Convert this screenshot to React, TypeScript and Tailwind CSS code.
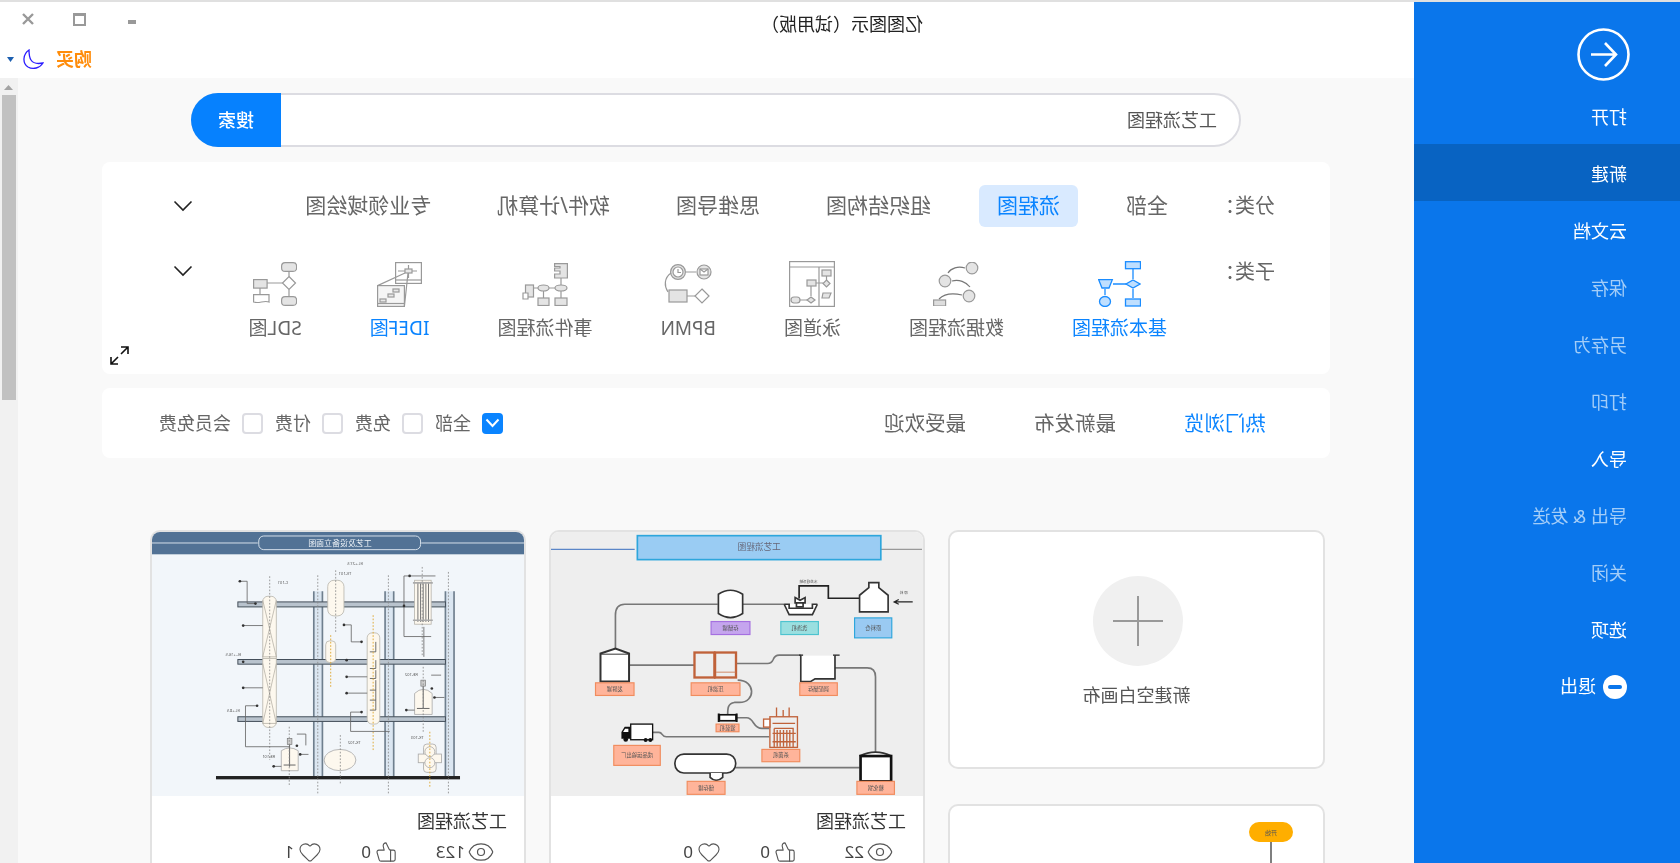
import { Eye, Heart, ThumbsUp } from "lucide-react";

const menu = [
  { label: "打开", on: true },
  { label: "新建", on: true, active: true },
  { label: "云文档", on: true },
  { label: "保存" },
  { label: "另存为" },
  { label: "打印" },
  { label: "导入", on: true },
  { label: "导出 & 发送" },
  { label: "关闭" },
  { label: "选项", on: true },
];

const categories = ["全部", "流程图", "组织结构图", "思维导图", "软件/计算机", "专业领域绘图"];
const filters = ["全部", "免费", "付费", "会员免费"];

function Chevron() {
  return (
    <svg width="20" height="12" viewBox="0 0 20 12" fill="none" stroke="#222" strokeWidth="1.6">
      <path d="M1.5 1.5L10 10L18.5 1.5" />
    </svg>
  );
}

function BasicIcon() {
  return (
    <svg width="43" height="46" viewBox="0 0 43 46" className="-scale-x-100" fill="#bfdfff" stroke="#1a8cff" strokeWidth="1.3">
      <rect x="27.5" y="0.7" width="15" height="7" />
      <path d="M35 19L42 23L35 27L28 23Z" />
      <path d="M0.7 18.7H14.3L11 27H4Z" />
      <ellipse cx="7" cy="40.5" rx="5.5" ry="5" />
      <rect x="27.5" y="38" width="15" height="7" />
      <path d="M35 8V18M35 28V37M28 23H15M7 28V34" fill="none" />
    </svg>
  );
}

function DataIcon() {
  return (
    <svg width="46" height="44" viewBox="0 0 46 44" className="-scale-x-100" fill="#e4e4e4" stroke="#999" strokeWidth="1.2">
      <circle cx="39" cy="6" r="5.8" />
      <circle cx="12" cy="19" r="5.8" />
      <circle cx="36" cy="34" r="5.8" />
      <rect x="0.6" y="38" width="12" height="6" fill="#ddd" />
      <path d="M32 6C25 4 18 6 15 11M19 19C26 17 33 20 37 25M29 33C20 31 11 32 6 37" fill="none" stroke="#777" />
    </svg>
  );
}

function SwimIcon() {
  return (
    <svg width="46" height="46" viewBox="0 0 46 46" className="-scale-x-100" fill="#e4e4e4" stroke="#999" strokeWidth="1.2">
      <rect x="0.6" y="0.6" width="44.8" height="44.8" fill="#fff" />
      <path d="M0.6 6H45.4M30 6V45" fill="none" />
      <rect x="33" y="9" width="9" height="6" />
      <path d="M37.5 19L41 22.5L37.5 26L34 22.5Z" />
      <rect x="18" y="19" width="9" height="6" />
      <path d="M22 36L26 39L22 42L18 39Z" />
      <path d="M34 32H42L40 37H33Z" />
      <rect x="2" y="36" width="9" height="6" rx="3" />
      <path d="M22 25V35M11 39H18M37.5 15V19M27 22H34" fill="none" />
    </svg>
  );
}

function BpmnIcon() {
  return (
    <svg width="48" height="40" viewBox="0 0 48 40" className="-scale-x-100" fill="#e4e4e4" stroke="#999" strokeWidth="1.2">
      <circle cx="14" cy="8" r="7.4" />
      <circle cx="14" cy="8" r="5" fill="#fff" />
      <path d="M14 5V8.5H17" fill="none" />
      <circle cx="40" cy="8" r="7" />
      <rect x="36" y="5" width="8" height="6" fill="#fff" />
      <path d="M36 5L40 8L44 5" fill="none" />
      <rect x="5" y="26" width="18" height="12" />
      <path d="M38 25L45 32L38 39L31 32Z" fill="#fff" />
      <path d="M22 8H32M23 32H31M7 9C0 14 0 22 4 28" fill="none" />
    </svg>
  );
}

function EventIcon() {
  return (
    <svg width="46" height="43" viewBox="0 0 46 43" className="-scale-x-100" fill="#e4e4e4" stroke="#999" strokeWidth="1.2">
      <path d="M32.6 0.6H45.4V15H32.6V11H38V8H32.6V5H38V3.5H32.6Z" />
      <ellipse cx="39" cy="25" rx="6" ry="3" />
      <ellipse cx="21.5" cy="25" rx="5.5" ry="3" />
      <rect x="16" y="35" width="11" height="7.5" />
      <rect x="33" y="35" width="12" height="7.5" />
      <rect x="3.5" y="22" width="8" height="12" />
      <path d="M1 30H6V36H1Z" fill="#fff" />
      <path d="M39 15V22M33 25H27M16 25H12M21.5 35V28M39 35V28" fill="none" />
    </svg>
  );
}

function IdefIcon() {
  return (
    <svg width="45" height="45" viewBox="0 0 45 45" className="-scale-x-100" fill="#e8e8e8" stroke="#999" strokeWidth="1.2">
      <rect x="18.6" y="0.6" width="25.8" height="20.8" fill="#fff" />
      <path d="M18.6 18H44.4" fill="none" />
      <rect x="0.6" y="23.6" width="26.8" height="20.8" fill="#f5f5f5" />
      <path d="M0.6 41.5H27.4" fill="none" />
      <rect x="28" y="7" width="7" height="4" />
      <path d="M21 9H28M35 9H40M31.5 3V7M31.5 11V16M28 11L0.6 23.6M31 11L27.4 44.4" fill="none" />
      <rect x="16" y="27" width="6" height="3" />
      <rect x="11" y="32" width="6" height="3" />
      <rect x="3" y="37" width="6" height="3" />
    </svg>
  );
}

function SdlIcon() {
  return (
    <svg width="44" height="44" viewBox="0 0 44 44" className="-scale-x-100" fill="#e4e4e4" stroke="#999" strokeWidth="1.2">
      <rect x="28.6" y="0.6" width="15" height="8.8" rx="3.5" />
      <path d="M36 14.5L42.5 21L36 27.5L29.5 21Z" fill="#fff" />
      <rect x="28.6" y="34.6" width="15" height="8.8" rx="3.5" />
      <rect x="0.6" y="17.6" width="13.5" height="8.5" />
      <path d="M0.6 32.6H16V40C11 38 6 42 0.6 40Z" fill="#fff" />
      <path d="M36 9.4V14.5M36 27.5V34.6M29.5 21H14.1M7 26V32.6" fill="none" />
    </svg>
  );
}

const subTypes = [
  { label: "基本流程图", icon: <BasicIcon />, blue: true },
  { label: "数据流程图", icon: <DataIcon /> },
  { label: "泳道图", icon: <SwimIcon /> },
  { label: "BPMN", icon: <BpmnIcon /> },
  { label: "事件流程图", icon: <EventIcon /> },
  { label: "IDEF图", icon: <IdefIcon />, blue: true },
  { label: "SDL图", icon: <SdlIcon /> },
];

// tiny caption inside a thumbnail, flipped back because the svg itself is flipped
function Cap({ x, y, t, size = 16, fill = "#555" }: { x: number; y: number; t: string; size?: number; fill?: string }) {
  return (
    <text transform={`translate(${x} ${y}) scale(-1 1)`} textAnchor="middle" fontSize={size} fill={fill}>
      {t}
    </text>
  );
}

function Tag({ x, y, w, h, t, fill = "#ffb49a", stroke = "#f08c5e" }: { x: number; y: number; w: number; h: number; t: string; fill?: string; stroke?: string }) {
  return (
    <g>
      <rect x={x} y={y} width={w} height={h} fill={fill} stroke={stroke} strokeWidth="3.5" />
      <Cap x={x + w / 2} y={y + h / 2 + 5} t={t} />
    </g>
  );
}

function ProcessThumb() {
  return (
    <svg viewBox="33 35 1120 793" className="block w-full h-[264px] -scale-x-100 blur-[0.6px]" preserveAspectRatio="none">
      <rect x="33" y="35" width="1120" height="793" fill="#eeeeee" />
      <path d="M33 87H285" stroke="#5b86c8" strokeWidth="4" />
      <path d="M1026 87H1150" stroke="#999" strokeWidth="4" />
      <rect x="293" y="46" width="733" height="72" fill="#9accf3" stroke="#2ea6dc" strokeWidth="5" />
      <Cap x={660} y={90} t="工艺流程图" size={26} fill="#667" />
      <g fill="none" stroke="#777" strokeWidth="5">
        <path d="M227 385V285Q227 252 255 252H535" />
        <path d="M610 252H735" />
        <path d="M268 435H465" />
        <path d="M590 430H685Q697 430 702 418Q707 405 720 405H785" />
        <path d="M888 443H985Q1010 443 1010 470V700" />
        <path d="M595 480C650 480 650 547 600 547H585C565 550 565 565 565 583" />
        <path d="M592 593H622C645 593 640 625 668 625H690" />
        <path d="M340 637H358C370 637 365 650 380 650H690" />
        <path d="M590 743H962" />
      </g>
      <g fill="none" stroke="#222" strokeWidth="5">
        <path d="M780 235V197H868V234H962" />
        <path d="M1122 245H1068M1080 238L1066 245L1080 252" strokeWidth="3.5" />
      </g>
      <g fill="#fff" stroke="#333" strokeWidth="5">
        <path d="M537 222Q573 198 610 222V280Q573 304 537 280Z" />
        <path d="M735 252L750 283H820L835 252M735 252H750V264H820V252H835" />
        <path d="M768 232L783 240L798 232V248H768ZM772 248H792V260H772Z" />
        <path d="M962 275V225L990 202V187H1020V202L1048 225V275Z" />
        <path d="M182 484V400L227 385L268 400V484Z" strokeWidth="6" />
        <path d="M182 402H268" strokeWidth="3" />
        <path d="M785 405V484H815L828 476H888V405" />
        <rect x="406" y="702" width="183" height="57" rx="27" />
        <path d="M512 759V772Q530 790 550 772V759" />
        <path d="M962 708Q1010 684 1058 708" />
        <rect x="965" y="708" width="92" height="76" strokeWidth="8" stroke="#111" />
      </g>
      <rect x="785" y="400" width="103" height="6" fill="#eeeeee" />
      <path d="M780 405H792M882 405H902" stroke="#222" strokeWidth="4" />
      <g stroke="#c0623a" strokeWidth="7">
        <rect x="465" y="397" width="60" height="75" fill="#eee" />
        <rect x="527" y="397" width="63" height="75" fill="#eee" />
      </g>
      <path d="M530 456H588" stroke="#d28a66" strokeWidth="3" />
      <rect x="540" y="584" width="50" height="18" fill="#fff" stroke="#111" strokeWidth="5" />
      <path d="M538 580V606M592 580V606" stroke="#111" strokeWidth="6" />
      <g fill="none" stroke="#c0623a" strokeWidth="4">
        <rect x="692" y="590" width="83" height="92" />
        <path d="M712 562V590M732 570V590M750 562V590M700 610H768M705 625H762V682M705 625V682M714 630V680M723 630V680M733 630V680M743 630V680M752 630V680M700 640H770M700 665H770" />
        <rect x="673" y="597" width="19" height="24" fill="#fff" />
      </g>
      <rect x="273" y="612" width="66" height="47" fill="#fff" stroke="#111" strokeWidth="4" />
      <path d="M272 620H255L245 636V656H272Z" fill="#111" />
      <path d="M256 626H266V636H250Z" fill="#fff" />
      <circle cx="258" cy="658" r="7" fill="#111" />
      <circle cx="318" cy="660" r="6" fill="#111" />
      <circle cx="332" cy="660" r="6" fill="#111" />
      <Tag x={515} y={304} w={117} h={39} t="存储罐" fill="#c5a5ee" stroke="#a56fe0" />
      <Tag x={725} y={304} w={113} h={39} t="洗涤机" fill="#9adfe0" stroke="#4dc3cf" />
      <Tag x={947} y={293} w={112} h={60} t="原料仓" fill="#9acaf2" stroke="#2ea6dc" />
      <Tag x={167} y={488} w={116} h={38} t="发酵罐" />
      <Tag x={455} y={488} w={147} h={38} t="压滤机" />
      <Tag x={782} y={488} w={113} h={38} t="调配储存" />
      <Tag x={530} y={612} w={69} h={23} t="灌装机" />
      <Tag x={668} y={688} w={114} h={37} t="杀菌机" />
      <Tag x={222} y={676} w={140} h={60} t="成品运输出厂" />
      <Tag x={443} y={784} w={114} h={39} t="储存罐" />
      <Tag x={954} y={784} w={113} h={39} t="糖化锅" />
      <Cap x={1095} y={222} t="原 料" size={11} />
      <Cap x={808} y={188} t="水处理系统" size={11} />
    </svg>
  );
}

function Vessel({ x, y, w, h }: { x: number; y: number; w: number; h: number }) {
  return <rect x={x} y={y} width={w} height={h} rx={w / 2.6} fill="#fdf8ee" stroke="#b9b6ae" strokeWidth="2.5" />;
}

function ElevationThumb() {
  return (
    <svg viewBox="33 35 1122 793" className="block w-full h-[264px] -scale-x-100 blur-[0.6px]" preserveAspectRatio="none">
      <rect x="33" y="35" width="1122" height="793" fill="#f2f6fa" />
      <rect x="33" y="35" width="1122" height="67" fill="#527295" />
      <path d="M33 68H352M845 68H1155" stroke="#d5e0ea" strokeWidth="3" />
      <rect x="355" y="47" width="488" height="41" rx="15" fill="#527295" stroke="#d5e0ea" strokeWidth="3" />
      <Cap x={600} y={76} t="工艺及设备立面图" size={24} fill="#eef3f8" />
      <g fill="#dbe6f1">
        <rect x="522" y="213" width="26" height="557" />
        <rect x="737" y="213" width="26" height="557" />
        <rect x="919" y="213" width="26" height="557" />
      </g>
      <g stroke="#6f7f8e" strokeWidth="5" fill="none">
        <path d="M521 213V770M547 213V770M736 213V770M762 213V770M918 213V770M944 213V770" />
      </g>
      <g fill="#b9c3cd" stroke="#444f5a" strokeWidth="3">
        <rect x="292" y="245" width="626" height="15" />
        <rect x="292" y="418" width="626" height="14" />
        <rect x="292" y="590" width="626" height="14" />
      </g>
      <rect x="226" y="768" width="736" height="10" fill="#222" />
      <Vessel x={367} y={228} w={41} h={394} />
      <path d="M367 240L408 410L367 410L408 240M367 430L408 610L367 610L408 430M367 415H408" fill="none" stroke="#a9a59a" strokeWidth="2" />
      <Vessel x={563} y={180} w={49} h={107} />
      <Vessel x={557} y={362} w={30} h={65} />
      <Vessel x={682} y={338} w={38} h={274} />
      <g fill="none" stroke="#555" strokeWidth="2.5">
        <path d="M690 395H708V365M690 445H708V420M690 475H708V450M690 510H708V480M690 540H708V510M690 570H708V540" />
      </g>
      <rect x="825" y="180" width="50" height="132" fill="#fdf8ee" stroke="#b9b6ae" strokeWidth="2.5" />
      <path d="M835 185V305M843 185V305M851 185V305M859 185V305M867 185V305" stroke="#777" strokeWidth="3" />
      <path d="M820 188H880M820 300H880" stroke="#aaa" strokeWidth="5" />
      <path d="M825 520Q851 495 878 520V583H825Z" fill="#fdf8ee" stroke="#aaa" strokeWidth="2.5" />
      <path d="M423 692Q448 675 474 692V752H423Z" fill="#fdf8ee" stroke="#aaa" strokeWidth="2.5" />
      <path d="M851 485V565M448 660V740M832 565H870M430 735H466" stroke="#666" strokeWidth="3" />
      <rect x="844" y="480" width="14" height="18" fill="#ccc" stroke="#777" strokeWidth="2" />
      <rect x="441" y="655" width="14" height="18" fill="#ccc" stroke="#777" strokeWidth="2" />
      <ellipse cx="600" cy="720" rx="48" ry="32" fill="#fdf8ee" stroke="#aaa" strokeWidth="2.5" />
      <rect x="852" y="672" width="38" height="85" rx="10" fill="#fdf8ee" stroke="#aaa" strokeWidth="2.5" />
      <rect x="836" y="702" width="70" height="26" fill="#fdf8ee" stroke="#aaa" strokeWidth="2.5" />
      <circle cx="871" cy="695" r="15" fill="#fdf8ee" stroke="#aaa" strokeWidth="2.5" />
      <circle cx="871" cy="728" r="15" fill="#fdf8ee" stroke="#aaa" strokeWidth="2.5" />
      <g fill="none" stroke="#888" strokeWidth="2.5" strokeDasharray="5 5">
        <path d="M388 168V720M587 150V335M848 140V410M851 440V635M447 620V800M601 645V795M533 165V820M746 165V820M927 155V820" />
      </g>
      <g fill="none" stroke="#e0ad3e" strokeWidth="3" strokeDasharray="5 5">
        <path d="M572 345V500M700 285V695M871 635V800" />
      </g>
      <g fill="none" stroke="#666" strokeWidth="2.5">
        <path d="M298 183H320V250H345M305 316H367M305 503H367M612 314H634V365H665M620 470H682M620 519H682M350 557H315V680H448M665 576H632V634H750M875 349H793V167H888M853 320V410M875 465H905M885 532H915M800 570H825M470 642H497V676M480 703H505M400 739H423" />
      </g>
      <g fill="#333">
        <circle cx="298" cy="183" r="4" />
        <circle cx="345" cy="250" r="4" />
        <circle cx="308" cy="316" r="4" />
        <circle cx="308" cy="425" r="4" />
        <circle cx="308" cy="503" r="4" />
        <circle cx="350" cy="557" r="4" />
        <circle cx="612" cy="314" r="4" />
        <circle cx="665" cy="365" r="4" />
        <circle cx="620" cy="420" r="4" />
        <circle cx="620" cy="470" r="4" />
        <circle cx="620" cy="519" r="4" />
        <circle cx="665" cy="576" r="4" />
        <circle cx="793" cy="257" r="4" />
        <circle cx="810" cy="167" r="4" />
        <circle cx="877" cy="505" r="4" />
        <circle cx="885" cy="532" r="4" />
        <circle cx="800" cy="570" r="4" />
        <circle cx="470" cy="677" r="4" />
        <circle cx="480" cy="703" r="4" />
        <circle cx="400" cy="739" r="4" />
      </g>
      <g>
        <Cap x={428} y={190} t="C-101" size={12} />
        <Cap x={615} y={163} t="TK-101" size={12} />
        <Cap x={645} y={133} t="EL.+27.5" size={12} />
        <Cap x={278} y={407} t="EL.+16.5" size={12} />
        <Cap x={278} y={575} t="EL.+8.5" size={12} />
        <Cap x={815} y={467} t="RE-102" size={12} />
        <Cap x={833} y={658} t="TK-103" size={12} />
        <Cap x={643} y={673} t="TK-102" size={12} />
        <Cap x={385} y={713} t="RE-101" size={12} />
      </g>
    </svg>
  );
}

function StartThumb() {
  return (
    <svg width="120" height="80" viewBox="0 0 120 80" className="absolute left-0 top-0 blur-[0.3px]">
      <rect x="30" y="16" width="44" height="20" rx="10" fill="#ffae00" />
      <path d="M52 36V80" stroke="#555" strokeWidth="1.5" />
      <text x="52" y="29" textAnchor="middle" fontSize="6" fill="#555">
        开始
      </text>
    </svg>
  );
}

function TemplateCard({ thumb, views, likes, favs }: { thumb: React.ReactNode; views: number; likes: number; favs: number }) {
  return (
    <div className="bg-white border-2 border-[#e2e2e2] rounded-[10px] overflow-hidden h-[400px]">
      {thumb}
      <div className="pl-[17px] pt-[12px] text-[18px] leading-[26px] text-[#333]">工艺流程图</div>
      <div className="flex items-center h-[30px] mt-[3px] pl-[29px] text-[17px] text-[#444]">
        <div className="w-[98px] flex items-center gap-[2px]">
          <Eye size={28} strokeWidth={1.05} className="text-[#555]" />
          {views}
        </div>
        <div className="w-[75px] flex items-center gap-[4px]">
          <ThumbsUp size={22} strokeWidth={1.2} className="text-[#555]" />
          {likes}
        </div>
        <div className="flex items-center gap-[4px]">
          <Heart size={24} strokeWidth={1.1} className="text-[#555]" />
          {favs}
        </div>
      </div>
    </div>
  );
}

export default function App() {
  return (
    <div className="w-[1680px] h-[863px] overflow-hidden flex flex-col bg-white -scale-x-100 font-['Noto_Sans','Noto_Sans_CJK_SC','Liberation_Sans',sans-serif]">
      <div className="h-[2px] shrink-0 bg-[#e0e0e0]" />
      <div className="flex flex-1 min-h-0">
        {/* left menu */}
        <aside className="w-[266px] shrink-0 bg-[#0a76eb] text-[18px] text-white">
          <div className="h-[85px] pl-[50px] pt-[26px]">
            <svg width="53" height="53" viewBox="0 0 53 53" fill="none" stroke="#fff" strokeWidth="2.6">
              <circle cx="26.5" cy="26.5" r="25" />
              <path d="M39 26.5H14M25 15L14 26.5L25 38" />
            </svg>
          </div>
          {menu.map((m) => (
            <div
              key={m.label}
              className={`h-[57px] pl-[53px] pt-[4px] flex items-center ${m.active ? "bg-[#0863c2]" : ""} ${m.on ? "text-white" : "text-[#a3cdf8]"}`}
            >
              {m.label}
            </div>
          ))}
          <div className="h-[57px] pl-[53px] pt-[2px] flex items-center gap-[7px]">
            <span className="w-[24px] h-[24px] rounded-full bg-white flex items-center justify-center">
              <span className="w-[14px] h-[4px] rounded-full bg-[#0a76eb]" />
            </span>
            退出
          </div>
        </aside>

        <div className="flex-1 min-w-0 flex flex-col">
          {/* title bar */}
          <header className="h-[76px] shrink-0 bg-white">
            <div className="h-[38px] flex items-center pl-[491px] text-[18px] text-[#222]">
              <span className="mt-[6px]">亿图图示（试用版）</span>
              <div className="ml-auto -mt-[4px] flex items-center text-[#999]">
                <span className="w-[8px] h-[4px] mt-[6px] bg-[#999]" />
                <span className="w-[13px] h-[13px] ml-[42px] border-2 border-t-[3px] border-[#999]" />
                <svg width="12" height="12" viewBox="0 0 12 12" className="ml-[39px] mr-[22px]" stroke="#999" strokeWidth="2.4">
                  <path d="M1 1L11 11M11 1L1 11" />
                </svg>
              </div>
            </div>
            <div className="h-[38px] flex items-center justify-end pr-[7px]">
              <span className="text-[18px] font-bold text-[#ff8c0a] mt-[1px]">购买</span>
              <svg width="22" height="21" viewBox="0 0 22 21" className="ml-[12px]" fill="#fff" stroke="#2a1cff" strokeWidth="1.3">
                <path d="M15 1C21 5 22 14 16 18C11 21 4 19 1 14C6 15 11 14 13 11C15 8 15 4 15 1Z" />
              </svg>
              <svg width="7" height="5" viewBox="0 0 7 5" className="ml-[8px]" fill="#1c5fb0">
                <path d="M0 0H7L3.5 5Z" />
              </svg>
            </div>
          </header>

          <div className="flex-1 min-h-0 flex">
            <main className="flex-1 min-w-0 bg-[#f9f9f9] overflow-hidden pl-[84px] pt-[15px]">
              {/* search */}
              <div className="ml-[89px] w-[1050px] h-[54px] flex items-center rounded-full bg-white border-2 border-[#dcdce2] relative">
                <span className="pl-[22px] text-[18px] text-[#555]">工艺流程图</span>
                <button className="absolute right-[-2px] top-[-2px] h-[54px] w-[90px] rounded-r-full bg-[#0681fe] text-white text-[18px] font-medium">
                  搜索
                </button>
              </div>

              {/* category panel */}
              <section className="relative mt-[15px] w-[1228px] h-[212px] bg-white rounded-lg pl-[55px] pr-[71px] pt-[23px] text-[#666]">
                <div className="flex items-center h-[42px]">
                  <span className="w-[89px] text-[20px]">分类：</span>
                  <div className="flex gap-[30px] text-[21px]">
                    {categories.map((c) => (
                      <span
                        key={c}
                        className={`h-[42px] px-[18px] flex items-center rounded-md ${c === "流程图" ? "bg-[#d9eaff] text-[#0a84ff]" : ""}`}
                      >
                        {c}
                      </span>
                    ))}
                  </div>
                  <span className="ml-auto">
                    <Chevron />
                  </span>
                </div>
                <div className="flex items-start mt-[34px]">
                  <span className="w-[108px] text-[20px] leading-[22px]">子类：</span>
                  <div className="flex gap-[68px] text-[19px]">
                    {subTypes.map((s) => (
                      <div key={s.label} className={`flex flex-col items-center ${s.blue ? "text-[#0a84ff]" : ""}`}>
                        <div className="h-[46px] flex items-center justify-center">{s.icon}</div>
                        <span className="mt-[8px] leading-[26px] whitespace-nowrap">{s.label}</span>
                      </div>
                    ))}
                  </div>
                  <span className="ml-auto mt-[4px]">
                    <Chevron />
                  </span>
                </div>
                <svg width="21" height="21" viewBox="0 0 21 21" className="absolute right-[7px] bottom-[8px]" fill="none" stroke="#111" strokeWidth="1.6">
                  <path d="M2 9V2H9M2 2L9 9M19 12V19H12M19 19L12 12" />
                </svg>
              </section>

              {/* sort + filter panel */}
              <section className="mt-[14px] w-[1228px] h-[70px] bg-white rounded-lg pl-[64px] pr-[57px] flex items-center text-[#666]">
                <div className="flex gap-[68px] text-[20.5px]">
                  <span className="text-[#0a84ff]">热门浏览</span>
                  <span>最新发布</span>
                  <span>最受欢迎</span>
                </div>
                <div className="ml-auto flex items-center gap-[12px] text-[18px]">
                  {filters.map((f, i) => (
                    <label key={f} className="flex items-center gap-[11px]">
                      {i === 0 ? (
                        <span className="w-[21px] h-[21px] rounded-[4px] bg-[#0a84ff] flex items-center justify-center">
                          <svg width="15" height="10" viewBox="0 0 15 10" fill="none" stroke="#fff" strokeWidth="2">
                            <path d="M1.5 1.5L7.5 8L13.5 1.5" />
                          </svg>
                        </span>
                      ) : (
                        <span className="w-[21px] h-[21px] rounded-[4px] border-2 border-[#dcdce2]" />
                      )}
                      {f}
                    </label>
                  ))}
                </div>
              </section>

              {/* templates */}
              <div className="mt-[72px] ml-[5px] flex gap-[23px] items-start">
                <div className="w-[377px] flex flex-col gap-[35px]">
                  <div className="h-[239px] bg-white border-2 border-[#e2e2e2] rounded-[10px] flex flex-col items-center pt-[44px]">
                    <div className="w-[90px] h-[90px] mr-[3px] rounded-full bg-[#f0f0f0] flex items-center justify-center">
                      <svg width="50" height="50" viewBox="0 0 50 50" stroke="#999" strokeWidth="2">
                        <path d="M25 0V50M0 25H50" />
                      </svg>
                    </div>
                    <span className="mt-[16px] text-[18px] leading-[26px] text-[#555]">新建空白画布</span>
                  </div>
                  <div className="relative h-[200px] bg-white border-2 border-[#e2e2e2] rounded-[10px] overflow-hidden">
                    <StartThumb />
                  </div>
                </div>
                <div className="w-[376px]">
                  <TemplateCard thumb={<ProcessThumb />} views={22} likes={0} favs={0} />
                </div>
                <div className="w-[376px]">
                  <TemplateCard thumb={<ElevationThumb />} views={123} likes={0} favs={1} />
                </div>
              </div>
            </main>

            {/* scrollbar */}
            <div className="w-[18px] shrink-0 bg-[#f1f1f1] pt-[7px] flex flex-col items-center">
              <svg width="9" height="5" viewBox="0 0 9 5" fill="#a3a3a3">
                <path d="M4.5 0L9 5H0Z" />
              </svg>
              <div className="mt-[5px] w-[14px] h-[305px] bg-[#c1c1c1]" />
            </div>
          </div>
        </div>
      </div>
    </div>
  );
}
